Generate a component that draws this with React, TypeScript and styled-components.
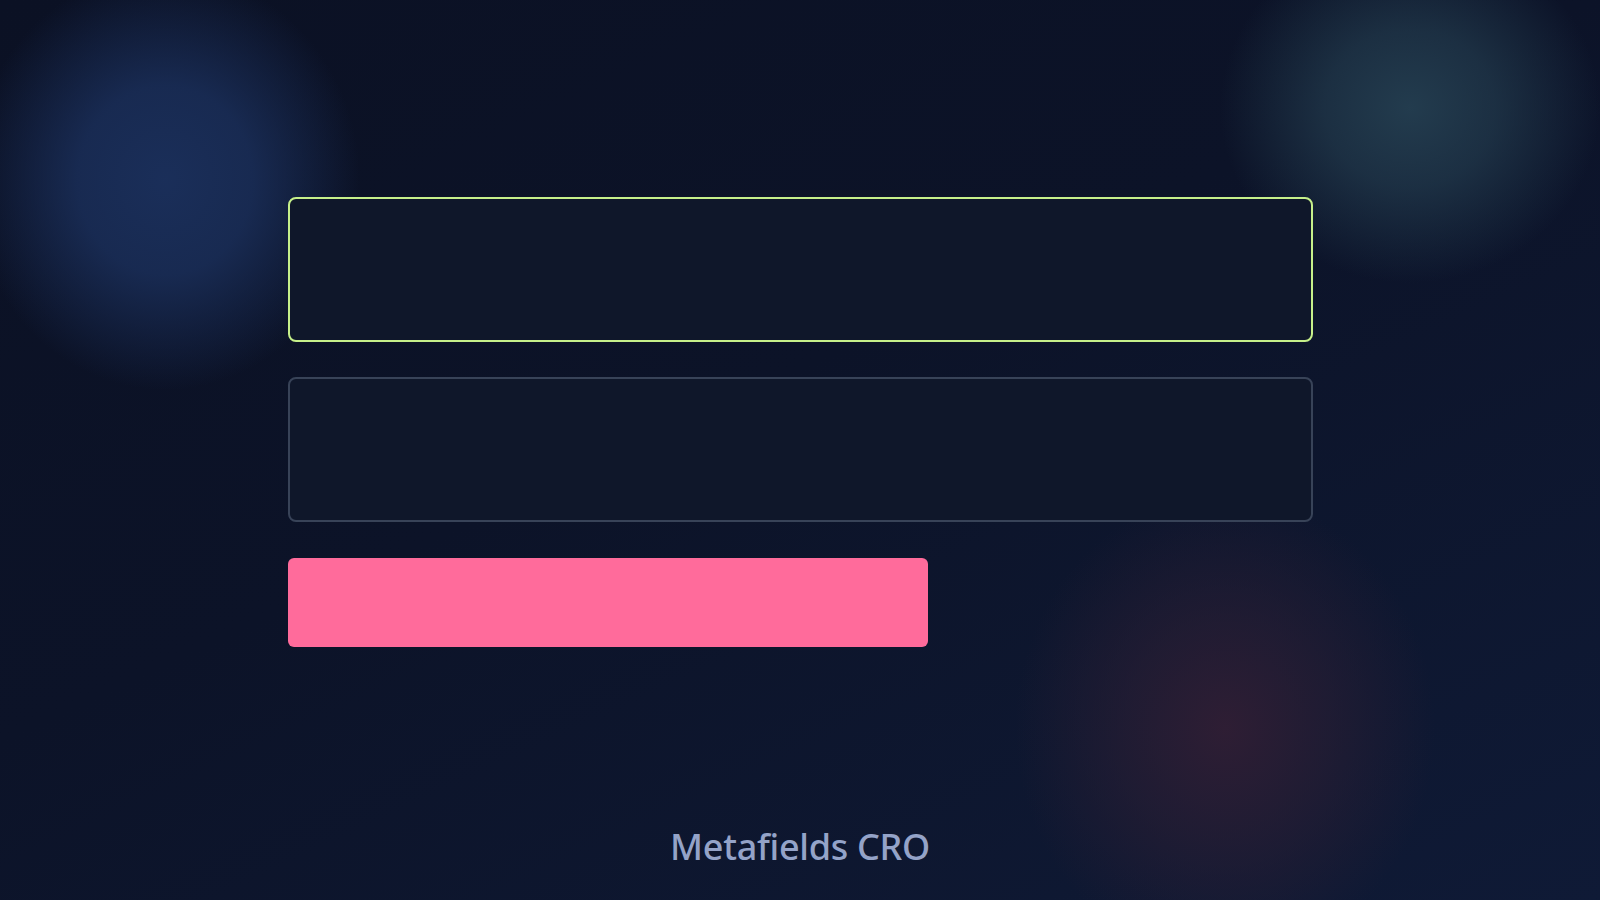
import React from "react";
import styled, { createGlobalStyle } from "styled-components";

const Global = createGlobalStyle`
  html, body { margin: 0; padding: 0; }
  body {
    width: 1600px;
    height: 900px;
    overflow: hidden;
    background: #0c1226;
    font-family: "Noto Sans", "Liberation Sans", sans-serif;
  }
`;

const Page = styled.main`
  width: 1600px;
  height: 900px;
  box-sizing: border-box;
  padding-top: 197px;
  background:
    radial-gradient(ellipse 195px 210px at 165px 180px, rgba(27, 48, 92, 0.95) 0%, rgba(27, 48, 92, 0.8) 45%, rgba(27, 48, 92, 0) 100%),
    radial-gradient(ellipse 190px 175px at 1410px 108px, rgba(36, 62, 80, 0.95) 0%, rgba(36, 62, 80, 0.65) 45%, rgba(36, 62, 80, 0) 100%),
    radial-gradient(ellipse 210px 235px at 1225px 728px, rgba(48, 30, 52, 0.95) 0%, rgba(42, 30, 52, 0.6) 50%, rgba(42, 30, 52, 0) 100%),
    linear-gradient(155deg, #0b1124 0%, #0c1328 45%, #0f1a36 100%);
  display: flex;
  flex-direction: column;
  align-items: center;
`;

const Column = styled.div`
  width: 1025px;
  display: flex;
  flex-direction: column;
`;

const Field = styled.div<{ $active?: boolean }>`
  height: 145px;
  box-sizing: border-box;
  border-radius: 8px;
  border: 2px solid ${(p) => (p.$active ? "#c6f08a" : "#384358")};
  background: #0f172a;
  margin-bottom: ${(p) => (p.$active ? "35px" : "36px")};
`;

const Submit = styled.button`
  width: 640px;
  height: 89px;
  border: none;
  border-radius: 6px;
  background: #ff6b9b;
  padding: 0;
  cursor: pointer;
`;

const Brand = styled.div`
  margin-top: 182px;
  font-family: "Noto Sans", "Liberation Sans", sans-serif;
  font-size: 36px;
  line-height: 36px;
  font-weight: 500;
  color: #94a3c8;
  letter-spacing: -0.3px;
`;

export default function App() {
  return (
    <>
      <Global />
      <Page>
        <Column>
          <Field $active />
          <Field />
          <Submit aria-label="submit" />
        </Column>
        <Brand>Metafields CRO</Brand>
      </Page>
    </>
  );
}
